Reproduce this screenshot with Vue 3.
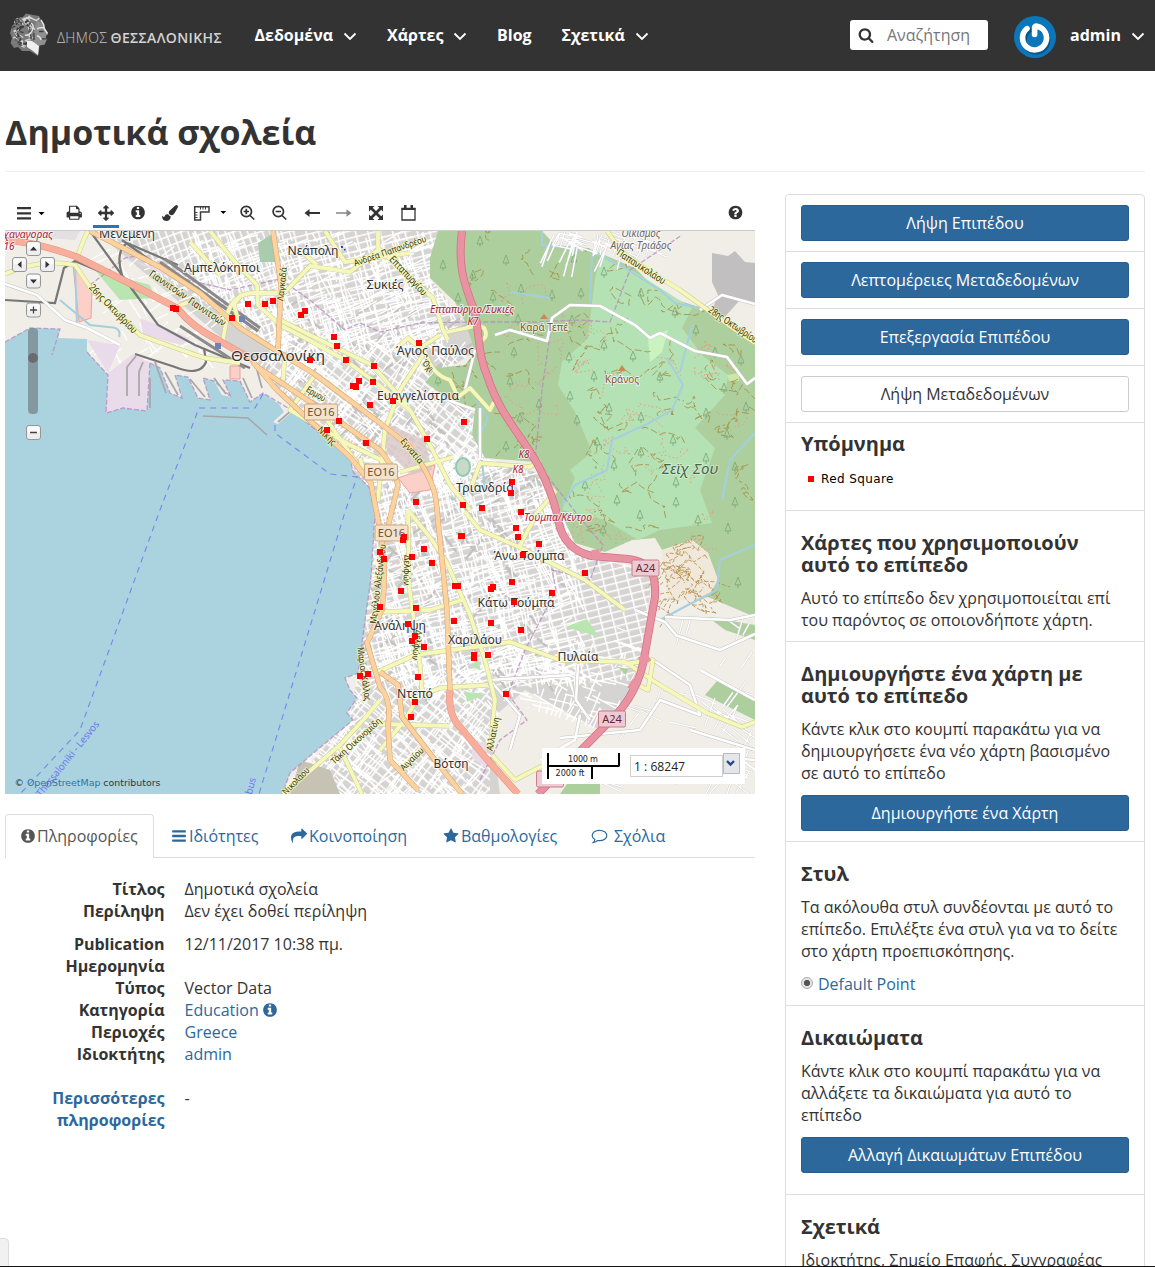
<script setup>
const info = 'M1152 1376v-160q0-14-9-23t-23-9h-96v-512q0-14-9-23t-23-9h-320q-14 0-23 9t-9 23v160q0 14 9 23t23 9h96v320h-96q-14 0-23 9t-9 23v160q0 14 9 23t23 9h448q14 0 23-9t9-23zm-128-896v-160q0-14-9-23t-23-9h-192q-14 0-23 9t-9 23v160q0 14 9 23t23 9h192q14 0 23-9t9-23zm640 416q0 209-103 385.5t-279.5 279.5-385.5 103-385.5-103-279.5-279.5-103-385.5 103-385.5 279.5-279.5 385.5-103 385.5 103 279.5 279.5 103 385.5z'
const bars = 'M1664 1344v128q0 26-19 45t-45 19h-1408q-26 0-45-19t-19-45v-128q0-26 19-45t45-19h1408q26 0 45 19t19 45zm0-512v128q0 26-19 45t-45 19h-1408q-26 0-45-19t-19-45v-128q0-26 19-45t45-19h1408q26 0 45 19t19 45zm0-512v128q0 26-19 45t-45 19h-1408q-26 0-45-19t-19-45v-128q0-26 19-45t45-19h1408q26 0 45 19t19 45z'
const share = 'M1792 640q0 26-19 45l-512 512q-19 19-45 19t-45-19-19-45v-256h-224q-98 0-175.5 6t-154 21.5-133 42.5-105.5 69.5-80 101-48.5 138.5-17.5 181q0 55 5 123 0 6 2.5 23.5t2.5 26.5q0 15-8.5 25t-23.5 10q-16 0-28-17-7-9-13-22t-13.5-30-10.5-24q-127-285-127-451 0-199 53-333 162-403 875-403h224v-256q0-26 19-45t45-19 45 19l512 512q19 19 19 45z'
const star = 'M1728 647q0 22-26 48l-363 354 86 500q1 7 1 20 0 21-10.5 35.5t-30.5 14.5q-19 0-40-12l-449-236-449 236q-22 12-40 12-21 0-31.5-14.5t-10.5-35.5q0-6 2-20l86-500-364-354q-25-27-25-48 0-37 56-46l502-73 225-455q19-41 49-41t49 41l225 455 502 73q56 9 56 46z'
const search = 'M1216 832q0-185-131.5-316.5t-316.5-131.5-316.5 131.5-131.5 316.5 131.5 316.5 316.5 131.5 316.5-131.5 131.5-316.5zm512 832q0 52-38 90t-90 38q-54 0-90-38l-343-342q-179 124-399 124-143 0-273.5-55.5t-225-150-150-225-55.5-273.5 55.5-273.5 150-225 225-150 273.5-55.5 273.5 55.5 225 150 150 225 55.5 273.5q0 220-124 399l343 343q37 37 37 90z'
const print = 'M448 1536h896v-256h-896v256zm0-640h896v-384h-160q-40 0-68-28t-28-68v-160h-640v640zm1152 64q0-26-19-45t-45-19-45 19-19 45 19 45 45 19 45-19 19-45zm128 0v416q0 13-9.5 22.5t-22.5 9.5h-224v160q0 40-28 68t-68 28h-960q-40 0-68-28t-28-68v-160h-224q-13 0-22.5-9.5t-9.5-22.5v-416q0-79 56.5-135.5t135.5-56.5h64v-544q0-40 28-68t68-28h672q40 0 88 20t76 48l152 152q28 28 48 76t20 88v256h64q79 0 135.5 56.5t56.5 135.5z'
const arrows = 'M1792 896q0 26-19 45l-256 256q-19 19-45 19t-45-19-19-45v-128h-384v384h128q26 0 45 19t19 45-19 45l-256 256q-19 19-45 19t-45-19l-256-256q-19-19-19-45t19-45 45-19h128v-384h-384v128q0 26-19 45t-45 19-45-19l-256-256q-19-19-19-45t19-45l256-256q19-19 45-19t45 19 19 45v128h384v-384h-128q-26 0-45-19t-19-45 19-45l256-256q19-19 45-19t45 19l256 256q19 19 19 45t-19 45-45 19h-128v384h384v-128q0-26 19-45t45-19 45 19l256 256q19 19 19 45z'
const brush = 'M1615 0q70 0 122.5 46.5t52.5 116.5q0 63-45 151-332 629-465 752-97 91-218 91-126 0-216.5-92.5t-90.5-219.5q0-128 92-212l638-579q59-54 130-54zm-909 1034q39 76 106.5 130t150.5 76l1 71q4 213-129.5 347t-348.5 134q-123 0-218-46.5t-152.5-127.5-86.5-183-29-220q7 5 41 30t62 44.5 59 36.5 46 17q41 0 55-37 25-66 57.5-112.5t69.5-76 88-47.5 103-25.5 125-10.5z'
const question = 'M1024 1376v-192q0-14-9-23t-23-9h-192q-14 0-23 9t-9 23v192q0 14 9 23t23 9h192q14 0 23-9t9-23zm256-672q0-88-55.5-163t-138.5-116-170-41q-243 0-371 213-15 24 8 42l132 100q7 6 19 6 16 0 25-12 53-68 86-92 34-24 86-24 48 0 85.5 26t37.5 59q0 38-20 61t-68 45q-63 28-115.5 86.5t-52.5 125.5v36q0 14 9 23t23 9h192q14 0 23-9t9-23q0-19 21.5-49.5t54.5-49.5q32-18 49-28.5t46-35 44.5-48 28-60.5 12.5-81zm384 192q0 209-103 385.5t-279.5 279.5-385.5 103-385.5-103-279.5-279.5-103-385.5 103-385.5 279.5-279.5 385.5-103 385.5 103 279.5 279.5 103 385.5z'

const nav = [
  { text: 'Δεδομένα', menu: true, w: 132.5 },
  { text: 'Χάρτες', menu: true, w: 110 },
  { text: 'Blog', w: 64.5 },
  { text: 'Σχετικά', menu: true, w: 100 },
]

const tabs = [
  { text: 'Πληροφορίες', icon: info, w: 149, active: true },
  { text: 'Ιδιότητες', icon: bars, w: 118 },
  { text: 'Κοινοποίηση', icon: share, w: 150 },
  { text: 'Βαθμολογίες', icon: star, w: 146 },
  { text: 'Σχόλια', w: 110 },
]

const sea = 'M5 342L30 328 60 329 58 338 87 339V352L108 375 106 413 123 408 147 411 150 363 160 368 170 393 182 398 175 375 188 377 198 398 210 400 203 378 214 381 222 395 231 397 223 380 240 381 250 402 263 393 279 404 284 412 273 422 278 424 293 411 350 458 353 472 369 487 375 513 371 577 362 643 358 673 345 678 350 690 357 698 347 713 353 720 317 750 290 773 282 794H5Z'
const forest = 'M438 231L430 258V278L455 302 465 322 475 352 465 365 438 368 425 382 452 402 475 408 472 435 485 458 535 462 555 495 562 515 575 543 605 552 632 540 655 538 662 550 692 540 708 553 718 580 708 597 755 617V342L702 308 662 295 635 268 588 248 555 245 542 231Z'
const lightForest = 'M602 255L635 272 692 308 682 328 702 355 728 375 725 395 695 428 715 448 700 490 712 523 660 530 638 540 605 520 562 510 575 478 570 470 592 452 575 412 558 385 562 362 588 338 595 278Z'

const motorway = 'M462 231C458 262 462 280 475 312 480 340 478 355 488 378 498 410 520 435 532 455 545 475 556 505 558 520 563 545 578 553 592 556L628 559C652 562 656 575 655 597L645 653C640 690 620 712 608 723L538 794'
const trunks = ['M5 240Q40 243 77 257L133 285 177 308Q192 327 218 340L253 360', 'M450 690Q448 710 456 722L485 757 518 794']
const primaries = [
  'M90 231L160 267 200 293 240 328 280 353 313 373 380 423 408 445Q432 475 436 500L447 610 450 692',
  'M253 362L277 390Q290 402 317 427L350 457 371 483 378 520Q388 560 382 610L367 643 380 687Q392 700 388 725L390 760 418 790',
  'M273 231L281 285 278 350',
  'M256 366L333 417 380 450Q393 465 398 485L386 535',
  'M380 672L398 685 402 717 435 760 462 794',
]
const secondaries = [
  'M5 274Q40 258 75 265L92 290 125 320 140 335Q180 350 205 358L240 363',
  'M78 255L84 239 88 231', 'M222 345L228 312Q235 293 255 293L284 293 310 266 350 272 378 250',
  'M240 329L234 304 242 294', 'M210 231L235 262 257 285 258 305 280 325 305 338 345 360 375 382 410 410 430 445 450 485 470 510',
  'M177 307L188 302', 'M190 242L220 275', 'M280 320L320 340 372 365 387 382 407 405', 'M378 231V248L405 273 433 298 443 330 448 340',
  'M443 333L480 325M420 348L440 335M398 347L408 338 425 352 400 390 385 430 378 500',
  'M425 352Q432 375 450 380L458 397 470 388 490 410 494 402', 'M478 342Q490 338 484 328 472 322 480 334',
  'M470 490L480 463 530 467 540 460', 'M400 472L453 457', 'M540 475L555 492 535 515',
  'M465 512L480 530 519 547 540 508', 'M519 547L585 580 625 610', 'M408 510L432 540 447 563 470 615 485 660 495 700 490 750',
  'M408 510L409 585 420 665 422 690 405 720 380 750', 'M382 612L430 610 462 600', 'M375 673L415 655 510 642 560 660 625 662 660 685 707 713 742 727 755 722',
  'M410 700L440 688 488 685', 'M380 724L450 726', 'M492 755L515 780 542 766', 'M645 655L634 683 648 690 653 660 625 664',
  'M607 231L622 252 650 272 680 290 705 308 740 333 755 343', 'M300 250L317 265M325 231L345 262 410 253',
  'M270 350L285 355 283 380M315 375L290 410 350 445 392 465', 'M283 794L340 745 365 718 380 700', 'M340 748L362 794', 'M320 410L365 475 360 458',
]
const minors = ['M5 284L37 295 65 320 87 328 120 345', 'M495 335L510 330 547 341 552 318 570 305 600 306 635 325 650 338 660 333 695 351 727 357 747 384 755 378',
  'M635 610L665 622 676 635M665 617L730 620 755 615', 'M578 665L576 700 590 720M490 680L520 715 510 750M490 680L570 675',
  'M653 660L690 685 700 715 660 700 640 730 560 738', 'M700 670L755 700M690 730L755 750M640 750L755 760',
  'M475 350L465 390', 'M540 760L575 740 580 715M675 635L720 650 755 634', 'M480 408L480 458M475 410L448 400', 'M700 310L722 295 755 304']
const rails = ['M90 231L124 278 158 325 195 345 250 368', 'M122 240L175 278 220 305 258 331', 'M122 275Q115 252 127 243L178 265', 'M5 300L55 303 64 268 75 261 108 275', 'M135 354L175 367Q200 377 206 362L204 348']
const quays = ['M127 396V367L136 356', 'M139 396V372L143 362', 'M165 372L178 395', 'M190 379L205 397', 'M214 378L226 394', 'M243 378L252 398', 'M150 378V408M257 370L262 388', 'M278 422L292 410M155 362L166 393']
const borders = ['M5 342L30 328 60 329 52 355', 'M87 352L108 375 106 413 123 408 147 411 150 363', 'M150 363L160 368 170 393 182 398 175 375 188 377 198 398 210 400 203 378 214 381 231 397 223 380 240 381 250 402 263 393 293 411 350 458 353 472 369 487 375 513 371 577 362 643 358 673 345 678 350 690 357 698 347 713 353 720 317 750 290 773 282 794',
  'M90 285L125 258 142 255 180 278 230 290 280 279 310 300 345 330 360 323 380 332 420 323 470 322 535 322 580 320 610 322 630 270 682 235', 'M552 320L542 390 535 460 580 518 603 545 590 580 552 570 556 590 525 650 508 694 527 720 500 740 480 780']
const streams = ['M542 231V245L588 250 625 268 660 290 675 303 705 309', 'M592 255L590 302', 'M510 292L550 298', 'M667 358L683 385 672 410 645 425 612 440 607 470 575 485 562 505', 'M755 545L720 560 717 590 688 605 660 620', 'M475 400L488 418 477 440M482 460L485 490', 'M75 262L77 325', 'M60 300L90 325 108 327Q122 327 119 337', 'M755 433L730 460 722 500M692 325L680 372']

// Repeatable pseudo-random numbers keep the street mesh stable between renders.
let seed = 17
const rand = () => ((seed = (seed * 16807) % 2147483647) / 2147483647)

function mesh(x0, y0, x1, y1, n, angle) {
  let d = ''
  for (let i = 0; i < n; i++) {
    const x = x0 + rand() * (x1 - x0)
    const y = y0 + rand() * (y1 - y0)
    const a = ((angle + (rand() > 0.5 ? 90 : 0) + (rand() - 0.5) * 26) * Math.PI) / 180
    const l = 8 + rand() * 26
    d += `M${x.toFixed(1)} ${y.toFixed(1)}l${(Math.cos(a) * l).toFixed(1)} ${(Math.sin(a) * l).toFixed(1)}`
  }
  return d
}
const cityMesh = mesh(190, 231, 450, 340, 520, 70) + mesh(260, 330, 480, 480, 480, 38) + mesh(375, 450, 580, 680, 820, 72) + mesh(300, 660, 490, 794, 340, 42) + mesh(500, 640, 640, 720, 110, 20)
const eastMesh = mesh(590, 610, 755, 794, 34, 25) + mesh(550, 231, 650, 246, 60, 20) + mesh(710, 705, 755, 780, 40, 30)
const portMesh = mesh(100, 245, 230, 350, 70, 60)
const blocks = mesh(280, 300, 560, 680, 260, 45)

function wiggles(n, x0, y0, x1, y1) {
  let d = ''
  for (let i = 0; i < n; i++) {
    const x = x0 + rand() * (x1 - x0)
    const y = y0 + rand() * (y1 - y0)
    d += `M${x.toFixed(0)} ${y.toFixed(0)}`
    for (let j = 0; j < 4; j++) d += `q${(rand() * 12 - 6).toFixed(0)} ${(rand() * 14 - 7).toFixed(0)} ${(rand() * 30 - 12).toFixed(0)} ${(rand() * 24 - 10).toFixed(0)}`
  }
  return d
}
const tracks = wiggles(90, 450, 235, 750, 540)
const paths = wiggles(46, 480, 300, 750, 560)
const quarry = wiggles(26, 662, 545, 705, 600)

// Locks of hair on the logo's head.
const curls = Array.from({ length: 80 }, (_, i) => {
  const a = rand() * 6.28
  const r = Math.sqrt(rand())
  const x = 21.5 + Math.cos(a) * r * 11.5
  const y = 31 + Math.sin(a) * r * 16
  return { d: `M${x.toFixed(1)} ${y.toFixed(1)}q${(rand() * 5 - 1).toFixed(1)} ${(rand() * -4).toFixed(1)} ${(rand() * 5).toFixed(1)} ${(rand() * 5 - 2).toFixed(1)}`, c: i % 2 ? '#3c3c3c' : '#cfcfcf' }
})

const trees = [[480,241],[506,260],[574,259],[443,265],[473,275],[604,272],[521,289],[493,297],[581,293],[641,293],[458,298],[552,295],[675,312],[518,319],[572,320],[696,330],[604,345],[633,356],[569,357],[660,377],[594,376],[715,352],[514,352],[741,360],[438,380],[510,381],[724,388],[570,396],[539,404],[609,408],[746,407],[577,420],[520,418],[706,413],[641,417],[673,440],[727,434],[506,446],[641,452],[597,442],[706,458],[614,465],[676,482],[735,467],[585,485],[617,500],[676,502],[735,502],[603,530],[728,528],[698,520],[738,582],[640,515]]

const markers = [[173,308],[176,309],[232,318],[248,304],[265,304],[273,301],[305,311],[301,315],[334,337],[337,346],[346,360],[310,360],[374,366],[359,381],[353,386],[356,387],[373,382],[419,343],[370,405],[393,401],[339,421],[327,430],[366,443],[464,422],[427,439],[512,482],[511,493],[416,502],[463,505],[482,508],[521,512],[516,528],[518,537],[461,536],[462,536],[404,537],[403,540],[424,549],[380,552],[384,559],[412,557],[432,563],[539,544],[523,555],[585,573],[401,591],[380,607],[416,608],[455,586],[458,586],[493,587],[491,589],[512,582],[552,593],[514,602],[454,621],[408,624],[491,623],[521,630],[415,636],[412,641],[424,647],[474,655],[474,658],[488,655],[360,676],[368,674],[418,677],[506,694],[415,702],[411,717]]

// Label: text, centre x, baseline y, size, drawn width, rotation, class
const labels = [
  ['Μενεμένη', 127, 238, 12, 56, 0, 'town'], ['Αμπελόκηποι', 222, 272, 12, 76, 0, 'town'], ['Νεάπολη', 313, 255, 12, 51, 0, 'town'],
  ['Συκιές', 385, 289, 12, 37, 0, 'town'], ['Θεσσαλονίκη', 278, 361, 15, 94, 0, 'town'], ['Άγιος Παύλος', 435, 355, 12, 78, 0, 'town'],
  ['Ευαγγελίστρια', 418, 400, 12, 82, 0, 'town'], ['Τριανδρία', 485, 492, 12, 58, 0, 'town'], ['Άνω Τούμπα', 529, 560, 12, 71, 0, 'town'],
  ['Κάτω Τούμπα', 516, 607, 12, 77, 0, 'town'], ['Ανάληψη', 400, 630, 12, 52, 0, 'town'], ['Χαριλάου', 475, 644, 12, 54, 0, 'town'],
  ['Πυλαία', 578, 661, 12, 41, 0, 'town'], ['Ντεπό', 415, 698, 12, 36, 0, 'town'], ['Βότση', 451, 768, 12, 35, 0, 'town'],
  ['χαναγορας', 28, 238, 11, 50, 0, 'exit'], ['16', 9, 250, 10, 11, 0, 'exit'],
  ['Επταπύργιο/Συκιές', 472, 313, 10, 84, 0, 'exit'], ['K7', 473, 325, 10, 11, 0, 'exit'], ['K8', 524, 458, 10, 11, 0, 'exit'], ['K8', 518, 473, 10, 11, 0, 'exit'],
  ['Τούμπα/Κέντρο', 558, 521, 10, 68, 0, 'exit'], ['Καρά Τεπέ', 544, 331, 10, 48, 0, 'peak'], ['Κράνος', 622, 383, 10, 34, 0, 'peak'],
  ['Σεϊχ Σου', 690, 474, 14, 56, 0, 'wood'], ['Οικισμός', 641, 237, 10, 39, 0, 'ham'], ['Αγίας Τριάδος', 641, 249, 10, 61, 0, 'ham'],
  ['Γιαννιτσών', 168, 288, 10, 43, 34, 'road'], ['Γιαννιτσών', 207, 315, 10, 43, 34, 'road'], ['26ης Οκτωβρίου', 113, 312, 10, 64, 46, 'road'],
  ['Λαγκαδά', 282, 287, 9, 34, -84, 'road'], ['Ανδρέα Παπανδρέου', 390, 254, 9, 76, -19, 'road'], ['Επταπυργίου', 408, 279, 10, 50, 47, 'road'],
  ['Παπανικολάου', 641, 270, 10, 56, 33, 'road'], ['28ης Οκτωβρίου', 733, 328, 10, 57, 34, 'road'], ['Όχι', 428, 369, 9, 13, 50, 'road'],
  ['Ερμού', 316, 397, 9, 21, 31, 'road'], ['Νικής', 327, 439, 9, 22, 45, 'road'], ['Εγνατία', 412, 454, 9, 30, 50, 'road'],
  ['Μεγάλου Αλεξάνδρου', 378, 587, 9, 80, -83, 'road'], ['Δελφών', 407, 573, 9, 30, 92, 'road'], ['Δελφών', 417, 648, 9, 30, 98, 'road'],
  ['Μαρίας Κάλλας', 364, 677, 9, 54, 82, 'road'], ['Τάκη Οικονομίδη', 356, 744, 9, 64, -42, 'road'], ['Αιγαίου', 412, 762, 9, 29, -44, 'road'],
  ['Αλλατίνη', 493, 737, 9, 34, -78, 'road'], ['Νικολάου', 296, 784, 9, 34, -45, 'road'],
  ['Thessaloniki - Lesvos', 68, 762, 10, 94, -51, 'ferry'], ['bus', 251, 789, 10, 17, -75, 'ferry'],
]
const shields = [['EO16', 321, 412, 33], ['EO16', 381, 472, 33], ['EO16', 391.5, 533, 33], ['A24', 645.5, 568, 27], ['A24', 612, 719, 27], ['', 550, 779, 27]]
</script>

<template>
  <div class="page">
    <header class="bar">
      <svg class="logo" width="220" height="70" viewBox="0 0 220 70">
        <path d="M13 48L9.500 43 11 38 9 33 11 26 14 23 16 18 22 17 25 13.500 32 15 38 16 40 20 43.500 24 44 29 47 34 44.800 36 45.500 40 43.500 44.500 38.500 45.500 38 51 37 56 29 51 21 51 17 47Z" fill="#7a7a7a" />
        <path v-for="(c, i) in curls" :key="i" :d="c.d" fill="none" :stroke="c.c" stroke-width="1.200" />
        <path d="M35 21Q42 22 43.500 28L47 34 44.500 36 45.500 40 43.500 44.500 38 45.500 33 43 32 37 34 30Z" fill="#8f8f8f" />
        <path d="M26 41L31 41 38 46 37 55Q31 50 26 47Z" fill="#efefef" />
        <path d="M36 29q3-2 7-1M40 20q3 4 3.500 9l3 4.500M36 36q3 0 4 4" fill="none" stroke="#e6e6e6" stroke-width="1.400" /><path d="M38 31.500h4.500M41 38.800h4M33 33v7" stroke="#3c3c3c" stroke-width="1.300" />
        <path d="M22 20q6-4 10-1t6-1M30 23q4 3 1 8t-7 4" fill="none" stroke="#ddd" stroke-width="1.500" />
        <text x="56" y="42.500" textLength="50" class="logo-thin">ΔΗΜΟΣ</text>
        <text x="109.500" y="42.500" textLength="111" class="logo-bold">ΘΕΣΣΑΛΟΝΙΚΗΣ</text>
      </svg>
      <nav class="nav">
        <a v-for="n in nav" :key="n.text" :style="{ width: n.w + 'px' }">
          {{ n.text }}<svg v-if="n.menu" class="chev" viewBox="0 0 14 9"><path d="M1.5 1.5L7 7l5.5-5.5" /></svg>
        </a>
      </nav>
      <div class="search">
        <svg width="16" height="16" viewBox="0 0 1792 1792"><path :d="search" /></svg><span>Αναζήτηση</span>
      </div>
      <svg class="avatar" width="42" height="42" viewBox="0 0 42 42">
        <circle cx="21" cy="21" r="21" fill="#0c76bb" />
        <path d="M14.5 13.2A11.8 11.8 0 1 0 27.3 13" transform="translate(1 1.2)" fill="none" stroke="#075485" stroke-width="5" stroke-linecap="round" />
        <path d="M13 12.6A12 12 0 1 0 23 10.2Q20.6 9.8 20.6 12V18.500" fill="none" stroke="#fff" stroke-width="5.600" stroke-linecap="round" stroke-linejoin="round" />
      </svg>
      <a class="user">admin<svg class="chev" viewBox="0 0 14 9"><path d="M1.5 1.5L7 7l5.500-5.500" /></svg></a>
    </header>

    <main>
      <h1><span>Δημοτικά σχολεία</span></h1>
      <div class="cols">
        <section class="left">
          <svg class="tools" width="750" height="37" viewBox="5 194 750 37">
            <g fill="#333">
              <path d="M17 207h14v2.300H17zM17 212.200h14v2.300H17zM17 217.300h14v2.300H17z" />
              <path d="M38.500 212h6l-3 3.200zM220.500 211h5.600l-2.800 3z" fill="#000" />
              <svg x="66" y="204.500" width="16.500" height="16.500" viewBox="0 0 1792 1792"><path :d="print" /></svg>
              <svg x="98" y="205" width="16" height="16" viewBox="0 0 1792 1792"><path :d="arrows" /></svg>
              <svg x="130" y="204.500" width="16" height="16" viewBox="0 0 1792 1792"><path :d="info" /></svg>
              <svg x="162" y="205" width="16" height="16" viewBox="0 0 1792 1792"><path :d="brush" /></svg>
              <svg x="727.500" y="204.500" width="16" height="16" viewBox="0 0 1792 1792"><path :d="question" /></svg>
              <path d="M369 206h5.500l-1.800 1.800 3.300 3.300 3.300-3.300L377.500 206h5.500v5.500l-1.800-1.800-3.300 3.300 3.300 3.300 1.800-1.800v5.500h-5.500l1.800-1.800-3.300-3.300-3.300 3.300 1.800 1.800H369v-5.500l1.800 1.800 3.300-3.300-3.300-3.300-1.800 1.800z" />
              <path d="M304.500 213l5-4v3h10.500v2h-10.500v3z" />
              <path d="M351.500 213l-5-3.800v3h-10.500v1.600h10.500v3z" fill="#888" />
            </g>
            <path d="M194.700 206.700h14.300v5.300h-8.500v8h-5.800z" fill="#fff" stroke="#3c3c3c" stroke-width="1.500" />
            <path d="M200.500 207v2.500M203 207v2.500M205.500 207v2.500M195 212.500h2.500M195 215h2.500M195 217.500h2.500" stroke="#3c3c3c" />
            <g fill="none" stroke="#333" stroke-width="1.700">
              <circle cx="246.300" cy="211.500" r="5.200" /><path d="M250 215.500l4.300 4M243.600 211.500h5.400M246.300 208.800v5.400" />
              <circle cx="278.300" cy="211.500" r="5.200" /><path d="M282 215.500l4.300 4M275.600 211.500h5.400" />
            </g>
            <path d="M402 208.500h13v11.500h-13z" fill="#fff" stroke="#333" stroke-width="1.300" />
            <path d="M401.500 208h14v2h-14zM404 205h2.500v4H404zM410.500 205h2.500v4h-2.500z" fill="#333" />
            <path d="M93 225h26v3H93z" fill="#2c75b3" />
            <path d="M5 230h750v1H5z" fill="#ccc" />
          </svg>

          <div class="map">
            <svg width="750" height="563" viewBox="5 231 750 563">
              <defs>
                <pattern id="g1" width="9" height="7" patternUnits="userSpaceOnUse" patternTransform="rotate(70)"><path d="M0 0H9M0 0V7" stroke="#fff" stroke-width="3" /></pattern>
                <pattern id="g2" width="10" height="8" patternUnits="userSpaceOnUse" patternTransform="rotate(38)"><path d="M0 0H10M0 0V8" stroke="#fff" stroke-width="3" /></pattern>
                <pattern id="g3" width="12" height="7" patternUnits="userSpaceOnUse" patternTransform="rotate(-14)"><path d="M0 0H12M0 0V7" stroke="#fff" stroke-width="3" /></pattern>
                <clipPath id="wood"><path :d="forest" /></clipPath>
                <clipPath id="town"><path d="M185 231L438 231 430 278 465 322 475 352 425 382 475 410 485 458 545 475 575 545 605 560 650 590 640 680 600 730 500 700 490 794H282L350 720 362 643 375 513 353 472 250 362 278 350 200 290Z" /></clipPath>
              </defs>
              <path d="M5 231h750v563H5z" fill="#f1eee8" />
              <path d="M95 231H438L430 278 465 322 475 352 425 382 475 410 485 458 545 475 575 545 605 560 652 575 640 680 600 730 525 690 490 720 500 794H282L350 720 362 643 375 513 353 472 250 362Z" fill="#d6d4d3" />
              <path d="M95 231H280L278 350 185 290Z" fill="url(#g1)" /><path d="M280 231H438L430 278 465 322 420 350 278 350Z" fill="url(#g3)" />
              <path d="M278 350L420 350 475 410 485 458 438 500 380 480 353 470 250 362Z" fill="url(#g2)" />
              <path d="M375 480L480 458 545 475 575 545 652 575 640 680 450 690 362 680Z" fill="url(#g3)" />
              <path d="M345 690H490V794H282Z" fill="url(#g2)" />
              <g clip-path="url(#town)" fill="none">
                <path :d="blocks" stroke="#c4c2c0" stroke-width="2.500" />
                <path :d="cityMesh" stroke="#fff" stroke-width="1.400" />
              </g>
              <path :d="portMesh" fill="none" stroke="#fff" stroke-width="1.300" />
              <path d="M5 231H80L75 240 5 235Z" fill="#e3dfe3" /><path d="M108 373L133 354 150 363 147 411 123 408 106 413ZM125 258L180 276 200 293 150 268ZM87 340L120 345 108 373ZM140 318L190 338 182 345 143 335ZM472 742h15v26l-15-10Z" fill="#e9dbe9" />
              <path d="M73 265L92 290 91 318 79 322ZM230 366h10v13h-10ZM398 478L435 465 430 490 410 493Z" fill="#fad0c9" stroke="#ef9f98" />
              <path d="M95 270L150 285 155 298 120 300ZM465 692l22 2-20 8ZM565 627l22-8 12 18ZM650 580l9-3-2 15ZM475 650l6 20-7-2Z" fill="#b9e5b0" /><path d="M258 243L272 234 276 262 260 262Z" fill="#a9cbae" />
              <path d="M390 425L425 440 432 470 410 475 383 445Z" fill="#d9c7c7" opacity=".8" /><ellipse cx="463" cy="467" rx="7" ry="9" fill="#c9d9c8" stroke="#8ccab3" stroke-width="2" />
              <path d="M300 760L330 770 340 794H290Z" fill="#c6c2b4" />
              <path d="M712 253L728 256 735 251 745 262 755 263V305L740 300 722 320 712 310 718 295 712 282Z" fill="#c2bfc1" />
              <path :d="forest" fill="#adcf9e" /><path :d="lightForest" fill="#b4e2b5" />
              <path d="M648 338L668 330 662 352 650 362Z" fill="#cbf3c0" /><path d="M727 375l12-2 0 8-10 0Z" fill="#cde5a8" />
              <path d="M708 617L755 625V640L725 630ZM718 680L755 700V720L705 695ZM567 784L600 774V794H560ZM618 667l10 2-2 6Z" fill="#adcf9e" />
              <path d="M662 550L692 540 708 553 718 580 705 600 668 600Z" fill="#efe8db" />
              <g clip-path="url(#wood)" fill="none">
                <path :d="tracks" stroke="#a58a3d" stroke-width=".8" stroke-dasharray="7 3" /><path :d="paths" stroke="#f0907c" stroke-width=".9" stroke-dasharray="1.500 2.500" />
              </g>
              <path :d="quarry" fill="none" stroke="#b3883c" stroke-width=".8" stroke-dasharray="4 2" />
              <path v-for="(t, i) in trees" :key="'t' + i" :d="`M${t[0]} ${t[1] - 5}l-3 8h6zM${t[0]} ${t[1] + 2}v4`" fill="none" stroke="#81ab7b" stroke-width=".9" />
              <path v-for="(s, i) in streams" :key="'s' + i" :d="s" fill="none" stroke="#a5cfdd" stroke-width="2" />
              <g fill="none"><path :d="eastMesh" stroke="#ccc" stroke-width="2" /><path :d="eastMesh" stroke="#fff" stroke-width="1.300" /></g>
              <path :d="sea" fill="#aad3df" />
              <path v-for="(b, i) in borders" :key="'b' + i" :d="b" fill="none" stroke="#b78bc0" stroke-width="1.300" stroke-dasharray="5 2" opacity=".8" />
              <path v-for="(q, i) in quays" :key="'q' + i" :d="q" fill="none" stroke="#a9a9a9" stroke-width="1.800" />
              <path v-for="(r, i) in rails" :key="'r' + i" :d="r" fill="none" stroke="#777" stroke-width="2.200" />
              <path d="M160 262L258 331M165 259L260 328M180 326L245 368" fill="none" stroke="#8a8a8a" stroke-width="3" />
              <g fill="none" stroke-linejoin="round">
                <path v-for="(m, i) in minors" :key="'mc' + i" :d="m" stroke="#c4c4c4" stroke-width="3.600" /><path v-for="(m, i) in minors" :key="'m' + i" :d="m" stroke="#fff" stroke-width="2.600" />
                <path v-for="(m, i) in secondaries" :key="'yc' + i" :d="m" stroke="#c9ca91" stroke-width="4.800" /><path v-for="(m, i) in secondaries" :key="'y' + i" :d="m" stroke="#f5f8ba" stroke-width="3.800" />
                <path v-for="(m, i) in primaries" :key="'pc' + i" :d="m" stroke="#d3a16c" stroke-width="5.400" /><path v-for="(m, i) in primaries" :key="'p' + i" :d="m" stroke="#fcd29f" stroke-width="4.400" />
                <path v-for="(m, i) in trunks" :key="'tc' + i" :d="m" stroke="#e3937f" stroke-width="7" /><path v-for="(m, i) in trunks" :key="'tr' + i" :d="m" stroke="#f8ae9a" stroke-width="6" />
                <path :d="motorway" stroke="#d66f86" stroke-width="8" /><path :d="motorway" stroke="#e892a2" stroke-width="6.500" />
                <path d="M600 554l-8 1M642 655l5 8M630 683l6 4" stroke="#e892a2" stroke-width="10" />
              </g>
              <g fill="none" stroke="#7b83ee" stroke-width="1.100" stroke-dasharray="6 5">
                <path d="M263 394L255 408 199 408 160 510 80 730 20 794" /><path d="M275 425V433L330 474 357 477 345 512 259 794" />
              </g>
              <path d="M203 416L248 418 267 435" fill="none" stroke="#a7a5a8" stroke-width="1.500" />
              <path d="M239 316h6v6h-6zM215 343h6v6h-6z" fill="#7382b5" />
              <path d="M540 319l4-5 4 5zM618 371l4-6 4 6z" fill="#cc8752" />
              <path d="M341 246h2v2h-2zM344 249h1.500v1.500H344z" fill="#33f" />
              <text v-for="(l, i) in labels" :key="'l' + i" :class="['lbl', l[6]]" :font-size="l[3]" :textLength="l[4]" lengthAdjust="spacingAndGlyphs" text-anchor="middle" :x="l[1]" :y="l[2]" :transform="l[5] ? `rotate(${l[5]} ${l[1]} ${l[2] - 3})` : undefined">{{ l[0] }}</text>
              <g v-for="(s, i) in shields" :key="'h' + i">
                <rect :x="s[1] - s[3] / 2" :y="s[2] - 8" :width="s[3]" height="16" rx="1.500" :fill="s[0] === 'EO16' ? '#f5e2cc' : '#eccbd3'" :stroke="s[0] === 'EO16' ? '#c9a77c' : '#ce7b8e'" />
                <text v-if="s[0]" class="shield" :x="s[1]" :y="s[2] + 4" text-anchor="middle" :fill="s[0] === 'A24' ? '#6b2438' : '#6a5430'">{{ s[0] }}</text>
              </g>
              <rect v-for="(m, i) in markers" :key="'k' + i" :x="m[0] - 3" :y="m[1] - 3" width="6" height="6" fill="#f00" />

              <rect x="28" y="328" width="10" height="86" rx="4" fill="#77868a" opacity=".75" /><circle cx="33" cy="358" r="5" fill="#696c6f" />
              <g v-for="(b, i) in [[33.500, 248.500], [19.500, 264.500], [47.500, 264.500], [33.500, 281], [33.500, 310], [33.500, 432.500]]" :key="'b' + i">
                <rect :x="b[0] - 7" :y="b[1] - 7" width="14" height="14" rx="2.500" fill="#eee" stroke="#969696" /><rect :x="b[0] - 6" :y="b[1] - 6" width="12" height="6" rx="1.500" fill="#fff" opacity=".7" />
              </g>
              <path d="M30 250.500h7l-3.500-4zM30 279.500h7l-3.500 4zM21.500 261v7l-4-3.500zM45.500 261v7l4-3.500z" fill="#333" />
              <path d="M30 310h7M33.500 306.500v7M30 432.500h7" stroke="#444" stroke-width="1.300" />
              <text class="attr" x="14.500" y="786" textLength="146" lengthAdjust="spacingAndGlyphs">© <tspan fill="#34729f">OpenStreetMap</tspan> contributors</text>

              <path d="M542 748h203v36H542z" fill="#fff" />
              <path d="M548 753v26M548 766h71M619 753v13.500M592 766v13" fill="none" stroke="#000" stroke-width="2" />
              <text class="scale" x="583" y="762" text-anchor="middle" textLength="30">1000 m</text>
              <text class="scale" x="570" y="776" text-anchor="middle" textLength="29">2000 ft</text>
              <rect x="630.500" y="755.500" width="92" height="21" fill="#fff" stroke="#d0d0d0" />
              <text class="ratio" x="634" y="771" textLength="51" lengthAdjust="spacingAndGlyphs">1 : 68247</text>
              <path d="M723.500 753.500h16v20h-16z" fill="#e4e6ec" stroke="#b5b8c8" /><path d="M727 761l3.500 3.500 3.500-3.500" fill="none" stroke="#244a80" stroke-width="2.400" />
            </svg>
          </div>

          <ul class="tabs">
            <li v-for="t in tabs" :key="t.text" :class="{ active: t.active }" :style="{ width: t.w + 'px' }">
              <svg v-if="t.icon" width="16" height="16" viewBox="0 0 1792 1792"><path :d="t.icon" /></svg>
              <svg v-else class="cm" width="17" height="16" viewBox="0 0 17 16"><path d="M8.500 2.300C12.600 2.300 15.800 4.600 15.800 7.500S12.600 12.700 8.500 12.700q-1 0-1.800-.2Q5 14 2.300 14.500q1.400-1.300 1.600-3Q1.200 10 1.200 7.500C1.200 4.600 4.400 2.300 8.500 2.300z" fill="none" stroke="currentColor" stroke-width="1.200" /></svg>
              <span>{{ t.text }}</span>
            </li>
          </ul>

          <dl>
            <dt>Τίτλος</dt><dd>Δημοτικά σχολεία</dd>
            <dt>Περίληψη</dt><dd class="gap">Δεν έχει δοθεί περίληψη</dd>
            <dt>Publication Ημερομηνία</dt><dd>12/11/2017 10:38 πμ.</dd>
            <dt>Τύπος</dt><dd>Vector Data</dd>
            <dt>Κατηγορία</dt><dd><a>Education <svg width="16" height="16" viewBox="0 0 1792 1792"><path :d="info" /></svg></a></dd>
            <dt>Περιοχές</dt><dd><a>Greece</a></dd>
            <dt>Ιδιοκτήτης</dt><dd class="gap2"><a>admin</a></dd>
            <dt><a>Περισσότερες πληροφορίες</a></dt><dd>-</dd>
          </dl>
        </section>

        <aside>
          <div class="item"><button class="btn">Λήψη Επιπέδου</button></div>
          <div class="item"><button class="btn">Λεπτομέρειες Μεταδεδομένων</button></div>
          <div class="item"><button class="btn">Επεξεργασία Επιπέδου</button></div>
          <div class="item"><button class="btn plain">Λήψη Μεταδεδομένων</button></div>
          <div class="item legend"><h4>Υπόμνημα</h4><div class="key"><i></i>Red Square</div></div>
          <div class="item"><h4>Χάρτες που χρησιμοποιούν<br>αυτό το επίπεδο</h4><p>Αυτό το επίπεδο δεν χρησιμοποιείται επί<br>του παρόντος σε οποιονδήποτε χάρτη.</p></div>
          <div class="item"><h4>Δημιουργήστε ένα χάρτη με<br>αυτό το επίπεδο</h4><p>Κάντε κλικ στο κουμπί παρακάτω για να<br>δημιουργήσετε ένα νέο χάρτη βασισμένο<br>σε αυτό το επίπεδο</p><button class="btn mt">Δημιουργήστε ένα Χάρτη</button></div>
          <div class="item"><h4>Στυλ</h4><p>Τα ακόλουθα στυλ συνδέονται με αυτό το<br>επίπεδο. Επιλέξτε ένα στυλ για να το δείτε<br>στο χάρτη προεπισκόπησης.</p><div class="radio"><i></i><a>Default Point</a></div></div>
          <div class="item rights"><h4>Δικαιώματα</h4><p>Κάντε κλικ στο κουμπί παρακάτω για να<br>αλλάξετε τα δικαιώματα για αυτό το<br>επίπεδο</p><button class="btn mt">Αλλαγή Δικαιωμάτων Επιπέδου</button></div>
          <div class="item"><h4>Σχετικά</h4><p>Ιδιοκτήτης, Σημείο Επαφής, Συγγραφέας</p></div>
        </aside>
      </div>
    </main>
    <div class="peek"></div>
    <div class="edge"></div>
  </div>
</template>

<style>
body { margin: 0; }
</style>
<style scoped>
.page { position: relative; width: 1155px; height: 1267px; overflow: hidden; background: #fff; color: #333; font: 400 16px/22px "Open Sans", "Noto Sans", sans-serif; }
.bar { height: 71px; background: #333; display: flex; align-items: center; color: #fff; box-sizing: border-box; padding-bottom: 1px; }
.logo { width: 222px; flex: none; overflow: visible; }
.logo-thin { font: 300 14px "Open Sans", sans-serif; fill: #c4c4c4; }
.logo-bold { font: 600 14px "Open Sans", sans-serif; fill: #d4d4d4; }
.nav { display: flex; margin-left: 32.5px; width: 595.5px; }
.nav a, .user { font-weight: 700; white-space: nowrap; }
.chev { width: 14px; height: 9px; margin-left: 10px; fill: none; stroke: #fff; stroke-width: 1.8; }
.search { display: flex; align-items: center; width: 138px; height: 30px; box-sizing: border-box; padding-left: 8px; background: #fff; border-radius: 3px; color: #777; gap: 13px; }
.search svg { fill: #333; }
.avatar { margin: 3px 14px 0 26px; flex: none; }
main { padding: 0 10px 0 5px; }
h1 { margin: 0 0 22px; height: 100px; border-bottom: 1px solid #eee; font: 700 34px/38px "Open Sans", sans-serif; }
h1 span { display: block; padding-top: 42px; }
.cols { display: flex; justify-content: space-between; align-items: flex-start; }
.left { width: 750px; }
.tools, .map svg { display: block; }
.map { height: 563px; overflow: hidden; }
.lbl { font-family: "Noto Sans", sans-serif; font-weight: 400; fill: #333; stroke: #fff; stroke-opacity: .65; stroke-width: 2px; paint-order: stroke; }
.exit { fill: #a8243a; font-style: italic; }
.peak { fill: #8a5336; }
.wood { fill: #46664a; font-style: italic; stroke-opacity: .35; }
.ham { fill: #666; font-style: italic; }
.road { fill: #35330f; stroke: #f7fabf; }
.ferry { fill: #6c76f2; stroke: none; }
.shield { font: 400 11px "Noto Sans", sans-serif; }
.attr { font: 400 9.5px "DejaVu Sans", sans-serif; fill: #333; }
.scale { font: 400 9px "DejaVu Sans Condensed", "Open Sans", sans-serif; fill: #222; }
.ratio { font: 400 13px "Open Sans", sans-serif; fill: #222; }
.tabs { list-style: none; display: flex; gap: 2px; height: 44px; margin: 20px 0; padding: 0; box-sizing: border-box; border-bottom: 1px solid #ddd; color: #2c689c; }
.tabs li { height: 44px; box-sizing: border-box; padding: 0 15px; display: flex; align-items: center; gap: 2px; white-space: nowrap; }
.tabs li.active { color: #555; background: #fff; border: 1px solid #ddd; border-bottom: 0; border-radius: 4px 4px 0 0; padding: 0 14px 1px; gap: 1px; }
.tabs svg, dd svg { fill: currentColor; flex: none; }
.tabs .cm { margin-right: 4px; }
dl { margin: 0; display: grid; grid-template-columns: 159.5px 1fr; column-gap: 20px; }
dt { font-weight: 700; text-align: right; padding-left: 40px; }
dd { margin: 0; }
.gap { margin-bottom: 11px; }
.gap2 { margin-bottom: 22px; }
a { color: #2c689c; }
dd svg { vertical-align: -2px; margin-left: -1px; }
.nav a, .user { color: #fff; }
aside { width: 360px; height: 1080px; box-sizing: border-box; border: 1px solid #ddd; border-radius: 4px 4px 0 0; }
.item { padding: 10px 15px; border-bottom: 1px solid #ddd; white-space: nowrap; }
.btn { display: block; width: 328px; height: 36px; padding: 0; border: 1px solid #285e8e; border-radius: 3px; background: #2c689c; color: #fff; font: 400 16px/22px "Open Sans", sans-serif; }
.btn.plain { background: #fff; color: #333; border-color: #ccc; }
.mt { margin-top: 11px; }
h4 { margin: 11px 0; font: 700 20px/22px "Open Sans", sans-serif; }
p { margin: 0; }
.legend { height: 67px; }
.legend h4 { margin: 0; }
.key { display: flex; align-items: center; margin: 14px 0 0 7px; font: 400 12px/20px "DejaVu Sans", sans-serif; letter-spacing: .4px; color: #000; }
.key i { width: 6px; height: 6px; background: #f00; margin-right: 7px; }
.radio { margin-top: 11px; display: flex; align-items: center; gap: 5px; }
.radio i { width: 12px; height: 12px; box-sizing: border-box; border: 1px solid #aaa; border-radius: 50%; background: radial-gradient(#555 0 2.800px, #e6e6e6 3.500px); margin-top: -2px; }
.rights { padding-bottom: 21px; }
.peek { position: absolute; left: -4px; bottom: -4px; width: 11px; height: 31px; background: #f1f1f1; border: 1px solid #ddd; border-radius: 4px; }
.edge { position: absolute; left: 0; bottom: 0; width: 100%; height: 1px; background: #111; }
</style>
